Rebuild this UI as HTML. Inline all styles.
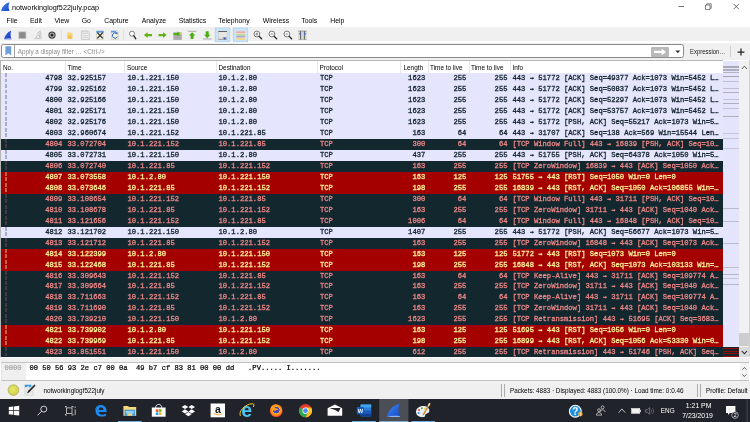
<!DOCTYPE html>
<html lang="en">
<head>
<meta charset="utf-8">
<title>notworkinglogf522july.pcap</title>
<style>
html,body{margin:0;padding:0;}
body{width:750px;height:422px;overflow:hidden;background:#fff;position:relative;
 font-family:"Liberation Sans",sans-serif;font-size:7px;color:#000;}
#app{position:absolute;left:0;top:0;width:750px;height:422px;overflow:hidden;background:#fff;will-change:transform;}
.abs{position:absolute;}
#title{left:0;top:0;width:750px;height:13px;background:#fff;}
#title .t{position:absolute;left:12px;top:2.5px;font-size:7.27px;line-height:9px;color:#000;white-space:nowrap;}
#menu{left:0;top:13px;width:750px;height:14px;background:#fff;}
#menu span{position:absolute;top:2.8px;font-size:6.9px;line-height:9px;white-space:nowrap;color:#000;}
#tool{left:0;top:27.2px;width:750px;height:14.3px;background:#f0f0f0;}
#filter{left:0;top:43.2px;width:750px;height:16.6px;background:#f0f0f0;}
#fbox{left:1.2px;top:44px;width:683px;height:14.4px;background:#fff;border:0.9px solid #8a8a8a;border-radius:2.4px;box-sizing:border-box;}
#expr{left:690px;top:47.1px;font-size:6.6px;line-height:9px;white-space:nowrap;color:#222;transform:scaleX(0.9);transform-origin:0 0;}
#fbox .ph{position:absolute;left:15.6px;top:2.4px;font-size:6.3px;line-height:9px;color:#8c8c8c;white-space:nowrap;}
#hdr{left:1px;top:60px;width:722px;height:12.5px;background:#fff;border-top:0.8px solid #b6b6b6;box-sizing:border-box;}
#hdr span{position:absolute;top:1.7px;font-size:6.4px;line-height:9px;color:#000;white-space:nowrap;}
#hdr i{position:absolute;top:0;width:0.6px;height:12px;background:#e9e9e9;}
#list{left:0;top:0;}
.row{position:absolute;left:1.2px;width:721.5px;height:11px;font-family:"Liberation Mono",monospace;font-size:7.17px;line-height:11px;white-space:nowrap;overflow:hidden;-webkit-text-stroke:0.3px;}
.row.l{background:#e5e5fd;color:#12222c;}
.row.d{background:#12272e;color:#e98585;}
.row.r{background:#a40000;color:#fbf096;}
.a{font-family:"DejaVu Sans Mono","Liberation Mono",monospace;display:inline-block;width:4.302px;text-align:center;font-size:6.4px;line-height:11px;vertical-align:top;}
.c{position:absolute;top:0;height:11px;}
.no{right:660.3px;text-align:right;}
.tm{left:66.3px;}
.src{left:126.3px;}
.dst{left:217.3px;}
.pr{left:318.8px;}
.len{right:297.4px;}
.t1{right:256.4px;}
.t2{right:215.2px;}
.inf{left:511.3px;}
#mm{left:722.7px;top:60.5px;width:16px;height:296.6px;background:#e4e4fd;overflow:hidden;}
#mm i{position:absolute;left:0;width:16px;background:#8c8c94;}
#mm b{position:absolute;left:0;width:16px;background:repeating-linear-gradient(to bottom,#12272e 0,#12272e 1.3px,#9a0a0a 1.3px,#9a0a0a 2.4px);}
#vsb{left:738.7px;top:60.5px;width:10.6px;height:296.6px;background:#f1f1f1;}
.dash{position:absolute;left:4.0px;top:0;width:1.7px;height:11px;opacity:.4;background:repeating-linear-gradient(to bottom,currentColor 0,currentColor 3.7px,transparent 3.7px,transparent 5.5px);}
.row.l .dash{opacity:.28;}
.row.d .dash{opacity:.22;}
#lborder{left:0.2px;top:60px;width:1px;height:298px;background:#b4b4b4;}
#hex{left:0.8px;top:362.2px;width:748.6px;height:18.6px;background:#fff;border:0.7px solid #c2c2c2;border-left-color:#e4e4e4;box-sizing:border-box;}
#hex .off{position:absolute;left:0;top:0;width:24.6px;height:17.3px;background:#efefef;}
#hex span{position:absolute;top:1.1px;font-family:"Liberation Mono",monospace;font-size:7.12px;line-height:9px;white-space:pre;color:#000;-webkit-text-stroke:0.22px;}
#status{left:0;top:380.5px;width:750px;height:18.5px;background:#f0f0f0;}
#status i{position:absolute;top:3px;width:0.8px;height:13px;background:#adadad;}
#status span{position:absolute;top:5px;font-size:6.35px;line-height:9px;white-space:nowrap;color:#000;}
#task{left:0;top:398.5px;width:750px;height:23.5px;background:#202329;}
#task span{position:absolute;line-height:9px;color:#fff;white-space:nowrap;}
</style>
</head>
<body>
<div id="app">
<div id="title" class="abs">
 <svg class="abs" style="left:1px;top:2px" width="10" height="9" viewBox="0 0 10 9"><defs><linearGradient id="tfin" x1="0" y1="0" x2="1" y2="1"><stop offset="0" stop-color="#3f86ee"/><stop offset="1" stop-color="#1748c8"/></linearGradient></defs><path d="M0.2 8.9 C0.9 5 4 1.2 8.4 0.2 C7.2 3 7.4 6.4 8.6 8.9 Z" fill="url(#tfin)"/></svg>
 <span class="t">notworkinglogf522july.pcap</span>
 <svg class="abs" style="left:672.8px;top:0" width="78" height="13" viewBox="0 0 78 13">
  <path d="M5.5 6.5 H11" stroke="#333" stroke-width="0.7" fill="none"/>
  <path d="M32.5 5 H37 V9.5 H32.5 Z M33.7 5 V3.8 H38.2 V8.3 H37" stroke="#333" stroke-width="0.6" fill="none"/>
  <path d="M60.5 3.8 L66 9.3 M66 3.8 L60.5 9.3" stroke="#333" stroke-width="0.7" fill="none"/>
 </svg>
</div>
<div id="menu" class="abs">
 <span style="left:6.4px">File</span><span style="left:30px">Edit</span><span style="left:54.4px">View</span><span style="left:81.7px">Go</span>
 <span style="left:104.2px">Capture</span><span style="left:141.7px">Analyze</span><span style="left:178.7px">Statistics</span>
 <span style="left:218.2px">Telephony</span><span style="left:262.7px">Wireless</span><span style="left:301.2px">Tools</span><span style="left:330.2px">Help</span>
</div>
<div id="tool" class="abs"></div>
<svg class="abs" style="left:0;top:27px" width="320" height="16" viewBox="0 27 320 16">
 <defs>
  <linearGradient id="fin" x1="0" y1="0" x2="1" y2="1"><stop offset="0" stop-color="#3a6fe8"/><stop offset="1" stop-color="#1733b8"/></linearGradient>
  <linearGradient id="fold" x1="0" y1="0" x2="0" y2="1"><stop offset="0" stop-color="#fbe08a"/><stop offset="1" stop-color="#f2b838"/></linearGradient>
 </defs>
 <!-- highlighted toggle backgrounds -->
 <rect x="215.2" y="28" width="14.6" height="13.8" fill="#cce4f7" stroke="#9ccaf0" stroke-width="0.6"/>
 <rect x="233.2" y="28" width="14.6" height="13.8" fill="#cce4f7" stroke="#9ccaf0" stroke-width="0.6"/>
 <!-- 1 start capture (shark fin) -->
 <path d="M4.2 39.2 C4.8 35.6 7.4 32 11.2 30.7 C10.3 33.4 10.4 36.6 11.5 39.2 Z" fill="url(#fin)"/>
 <path d="M4.2 39.2 H11.5 L11.3 38.6 C9 38.1 6.4 38.3 4.2 39.2Z" fill="#a9c0f0"/>
 <!-- 2 stop -->
 <rect x="18.9" y="31.9" width="7" height="6.6" fill="#8a8a8a" stroke="#bdbdbd" stroke-width="0.7"/>
 <!-- 3 restart -->
 <path d="M33.6 39.2 C36 37.6 38.6 34.4 40.6 30.6 C41 32 41.4 33 41.6 34 L41.8 39.2 Z" fill="#d2d2d2"/>
 <circle cx="38" cy="37" r="1.7" fill="#f0f0f0" stroke="#a8a8a8" stroke-width="0.5"/>
 <path d="M37 33.6 L40.4 30.8" stroke="#a0a0a0" stroke-width="0.6"/>
 <!-- 4 options -->
 <circle cx="52" cy="35.1" r="3.6" fill="#3a3a3a"/>
 <circle cx="52" cy="35.1" r="2.1" fill="none" stroke="#e8e8e8" stroke-width="0.8"/>
 <circle cx="52" cy="35.1" r="0.9" fill="#111"/>
 <!-- sep -->
 <rect x="60.9" y="29.6" width="0.6" height="11" fill="#d4d4d4"/>
 <!-- 5 open folder -->
 <path d="M67.3 32 H69.6 L70.2 32.8 H72.4 V38.8 H67.3 Z" fill="url(#fold)"/>
 <!-- 6 save -->
 <path d="M81.6 31 H87.6 L89.2 32.6 V39.6 H81.6 Z" fill="#ececec" stroke="#b4b4b4" stroke-width="0.6"/>
 <path d="M83.2 31 V33.4 H87 V31 M83 35.6 H88 M83 37.4 H88" stroke="#c4c4c4" stroke-width="0.6" fill="none"/>
 <!-- 7 close -->
 <rect x="96.3" y="30.9" width="7.4" height="8.7" fill="#f2f1e0" stroke="#c2c2b4" stroke-width="0.5"/>
 <rect x="96.3" y="30.9" width="7.4" height="1.8" fill="#5b9ae0"/>
 <path d="M97.3 32.6 L102.8 38.4 M102.8 32.6 L97.3 38.4" stroke="#1a1a1a" stroke-width="1.1" fill="none"/>
 <!-- 8 reload -->
 <rect x="111.1" y="30.9" width="7.4" height="8.7" fill="#f2f1e0" stroke="#c2c2b4" stroke-width="0.5"/>
 <rect x="111.1" y="30.9" width="5" height="1.6" fill="#5b9ae0"/>
 <path d="M116.6 33.6 A2.6 2.6 0 1 0 117.4 36.6" stroke="#2a62c8" stroke-width="1" fill="none"/>
 <path d="M115.2 32.2 L117.8 32.4 L117.2 34.8 Z" fill="#2a62c8"/>
 <!-- sep -->
 <rect x="123.3" y="29.6" width="0.6" height="11" fill="#d4d4d4"/>
 <!-- 9 find -->
 <circle cx="132" cy="33.7" r="2.5" fill="#fff" stroke="#555" stroke-width="0.7"/>
 <path d="M133.9 35.9 L135.8 38.8" stroke="#222" stroke-width="1.3" stroke-linecap="round"/>
 <!-- 10 back / 11 forward -->
 <path d="M143.9 35.1 L147.6 32.2 V33.9 H152 V36.3 H147.6 V38 Z" fill="#62b312"/>
 <path d="M166.7 35.1 L163 32.2 V33.9 H158.5 V36.3 H163 V38 Z" fill="#62b312"/>
 <!-- 12 goto -->
 <rect x="173.4" y="32.4" width="8.4" height="7.4" fill="#a2a2a2"/>
 <path d="M173.4 36.4 H181.8 M173.4 38.2 H181.8" stroke="#c8c8c8" stroke-width="0.5"/>
 <rect x="179.6" y="33.2" width="2.2" height="1.4" fill="#f4d84a"/>
 <path d="M180 33.9 L177.4 31.2 V32.9 H173.6 V34.9 H177.4 V36.6 Z" fill="#4fae10"/>
 <!-- 13 first -->
 <rect x="187.8" y="30.8" width="8.6" height="0.8" fill="#9a9a9a"/>
 <path d="M192.1 32.2 L195.4 35.6 H193.6 V39 H190.6 V35.6 H188.8 Z" fill="#4fae10"/>
 <!-- 14 last -->
 <rect x="203" y="38.6" width="8.4" height="0.8" fill="#9a9a9a"/>
 <path d="M207.2 38.2 L210.4 34.8 H208.7 V31.2 H205.7 V34.8 H204 Z" fill="#4fae10"/>
 <!-- 15 autoscroll -->
 <rect x="218.4" y="31.2" width="8.6" height="8.2" fill="#e6e6e2" stroke="#bcbcbc" stroke-width="0.4"/>
 <rect x="218.4" y="31" width="8.6" height="0.9" fill="#555"/>
 <rect x="218.4" y="38.8" width="8.6" height="0.8" fill="#8a8a8a"/>
 <path d="M222.6 37.6 H226.8 L224.7 39.6 Z" fill="#1c4fb4"/>
 <!-- 16 colorize -->
 <rect x="236.4" y="31.4" width="8.6" height="2.2" fill="#f2a7a0"/>
 <rect x="236.4" y="33.6" width="8.6" height="0.5" fill="#fff"/>
 <rect x="236.4" y="34.1" width="8.6" height="1.6" fill="#b4e47c"/>
 <rect x="236.4" y="35.7" width="8.6" height="1.9" fill="#b4a6e0"/>
 <rect x="236.4" y="37.6" width="8.6" height="2.5" fill="#ecd890"/>
 <!-- 17-19 zoom -->
 <g fill="#fff" stroke="#444" stroke-width="0.7">
  <circle cx="256.9" cy="34" r="2.9"/><circle cx="271.9" cy="34" r="2.9"/><circle cx="286.9" cy="34" r="2.9"/>
 </g>
 <g stroke="#222" stroke-width="1.3" stroke-linecap="round">
  <path d="M259.2 36.4 L261.6 38.8"/><path d="M274.2 36.4 L276.6 38.8"/><path d="M289.2 36.4 L291.6 38.8"/>
 </g>
 <path d="M255.4 34 H258.4 M256.9 32.5 V35.5 M270.4 34 H273.4 M285.6 34 H288.2" stroke="#444" stroke-width="0.6"/>
 <!-- 20 resize columns -->
 <rect x="298.2" y="30.9" width="8.6" height="9" fill="#d8d8d4"/>
 <rect x="298.2" y="30.7" width="8.6" height="0.7" fill="#8a8a8a"/>
 <rect x="298.2" y="39.4" width="8.6" height="0.6" fill="#b0b0b0"/>
 <rect x="300.2" y="31" width="0.9" height="8.6" fill="#555"/><rect x="303.9" y="31" width="0.9" height="8.6" fill="#555"/>
 <rect x="299.4" y="33" width="1.6" height="1.6" fill="#2a6ad4"/><rect x="304" y="33" width="1.6" height="1.6" fill="#2a6ad4"/>
</svg>
<div id="filter" class="abs"></div>
<div id="fbox" class="abs"><svg class="abs" style="left:3px;top:1.4px" width="7" height="10" viewBox="0 0 7 10"><path d="M0.4 0.2 H6.2 V9.6 L3.3 7.2 L0.4 9.6 Z" fill="#6f9fd8"/></svg><i class="abs" style="left:12.2px;top:0.4px;width:0.6px;height:11.8px;background:#a4a4a4"></i><span class="ph">Apply a display filter … &lt;Ctrl-/&gt;</span>
 <div class="abs" style="left:648.6px;top:2px;width:18px;height:9.8px;background:#b9b9b9;border-radius:1px"></div>
 <svg class="abs" style="left:648.6px;top:2px" width="18" height="9.8" viewBox="0 0 18 9.8"><path d="M3 3.7 H10.6 V1.6 L15 4.9 L10.6 8.2 V6.1 H3 Z" fill="#fff"/></svg>
 <svg class="abs" style="left:672.6px;top:4.9px" width="6" height="4" viewBox="0 0 6 4"><path d="M0.3 0.5 H5.3 L2.8 3.3 Z" fill="#333"/></svg>
</div>
<span class="abs" id="expr">Expression…</span>
<i class="abs" style="left:730.2px;top:46px;width:0.6px;height:11px;background:#cfcfcf"></i>
<svg class="abs" style="left:736.8px;top:47.6px" width="8" height="8" viewBox="0 0 8 8"><path d="M4 0.6 V7.4 M0.6 4 H7.4" stroke="#222" stroke-width="1.25"/></svg>
<div id="hdr" class="abs">
 <span style="left:2px">No.</span><span style="left:66.5px">Time</span><span style="left:126px">Source</span><span style="left:217.5px">Destination</span>
 <span style="left:318.5px">Protocol</span><span style="left:402.5px">Length</span><span style="left:429px">Time to live</span><span style="left:470px">Time to live</span><span style="left:511.5px">Info</span>
 <i style="left:63.6px"></i><i style="left:123.1px"></i><i style="left:214.6px"></i><i style="left:315.6px"></i><i style="left:399.1px"></i><i style="left:426.6px"></i><i style="left:467.6px"></i><i style="left:508.6px"></i>
</div>
<div id="list" class="abs">
<div class="row l" style="top:73.25px"><i class="dash"></i><span class="c no">4798</span><span class="c tm">32.925157</span><span class="c src">10.1.221.150</span><span class="c dst">10.1.2.80</span><span class="c pr">TCP</span><span class="c len">1623</span><span class="c t1">255</span><span class="c t2">255</span><span class="c inf">443 <span class="a">→</span> 51772 [ACK] Seq=49377 Ack=1073 Win=5452 L…</span></div>
<div class="row l" style="top:84.21px"><i class="dash"></i><span class="c no">4799</span><span class="c tm">32.925162</span><span class="c src">10.1.221.150</span><span class="c dst">10.1.2.80</span><span class="c pr">TCP</span><span class="c len">1623</span><span class="c t1">255</span><span class="c t2">255</span><span class="c inf">443 <span class="a">→</span> 51772 [ACK] Seq=50837 Ack=1073 Win=5452 L…</span></div>
<div class="row l" style="top:95.17px"><i class="dash"></i><span class="c no">4800</span><span class="c tm">32.925166</span><span class="c src">10.1.221.150</span><span class="c dst">10.1.2.80</span><span class="c pr">TCP</span><span class="c len">1623</span><span class="c t1">255</span><span class="c t2">255</span><span class="c inf">443 <span class="a">→</span> 51772 [ACK] Seq=52297 Ack=1073 Win=5452 L…</span></div>
<div class="row l" style="top:106.13px"><i class="dash"></i><span class="c no">4801</span><span class="c tm">32.925171</span><span class="c src">10.1.221.150</span><span class="c dst">10.1.2.80</span><span class="c pr">TCP</span><span class="c len">1623</span><span class="c t1">255</span><span class="c t2">255</span><span class="c inf">443 <span class="a">→</span> 51772 [ACK] Seq=53757 Ack=1073 Win=5452 L…</span></div>
<div class="row l" style="top:117.09px"><i class="dash"></i><span class="c no">4802</span><span class="c tm">32.925176</span><span class="c src">10.1.221.150</span><span class="c dst">10.1.2.80</span><span class="c pr">TCP</span><span class="c len">1623</span><span class="c t1">255</span><span class="c t2">255</span><span class="c inf">443 <span class="a">→</span> 51772 [PSH, ACK] Seq=55217 Ack=1073 Win=5…</span></div>
<div class="row l" style="top:128.05px"><i class="dash"></i><span class="c no">4803</span><span class="c tm">32.960674</span><span class="c src">10.1.221.152</span><span class="c dst">10.1.221.85</span><span class="c pr">TCP</span><span class="c len">163</span><span class="c t1">64</span><span class="c t2">64</span><span class="c inf">443 <span class="a">→</span> 31707 [ACK] Seq=138 Ack=569 Win=15544 Len…</span></div>
<div class="row d" style="top:139.01px"><i class="dash"></i><span class="c no">4804</span><span class="c tm">33.072704</span><span class="c src">10.1.221.152</span><span class="c dst">10.1.221.85</span><span class="c pr">TCP</span><span class="c len">300</span><span class="c t1">64</span><span class="c t2">64</span><span class="c inf">[TCP Window Full] 443 <span class="a">→</span> 16839 [PSH, ACK] Seq=10…</span></div>
<div class="row l" style="top:149.97px"><i class="dash"></i><span class="c no">4805</span><span class="c tm">33.072731</span><span class="c src">10.1.221.150</span><span class="c dst">10.1.2.80</span><span class="c pr">TCP</span><span class="c len">437</span><span class="c t1">255</span><span class="c t2">255</span><span class="c inf">443 <span class="a">→</span> 51755 [PSH, ACK] Seq=64378 Ack=1050 Win=5…</span></div>
<div class="row d" style="top:160.93px"><i class="dash"></i><span class="c no">4806</span><span class="c tm">33.072740</span><span class="c src">10.1.221.85</span><span class="c dst">10.1.221.152</span><span class="c pr">TCP</span><span class="c len">163</span><span class="c t1">255</span><span class="c t2">255</span><span class="c inf">[TCP ZeroWindow] 16839 <span class="a">→</span> 443 [ACK] Seq=1050 Ack…</span></div>
<div class="row r" style="top:171.89px"><i class="dash"></i><span class="c no">4807</span><span class="c tm">33.073558</span><span class="c src">10.1.2.80</span><span class="c dst">10.1.221.150</span><span class="c pr">TCP</span><span class="c len">163</span><span class="c t1">125</span><span class="c t2">125</span><span class="c inf">51755 <span class="a">→</span> 443 [RST] Seq=1050 Win=0 Len=0</span></div>
<div class="row r" style="top:182.85px"><i class="dash"></i><span class="c no">4808</span><span class="c tm">33.073646</span><span class="c src">10.1.221.85</span><span class="c dst">10.1.221.152</span><span class="c pr">TCP</span><span class="c len">198</span><span class="c t1">255</span><span class="c t2">255</span><span class="c inf">16839 <span class="a">→</span> 443 [RST, ACK] Seq=1050 Ack=106855 Win=…</span></div>
<div class="row d" style="top:193.81px"><i class="dash"></i><span class="c no">4809</span><span class="c tm">33.108654</span><span class="c src">10.1.221.152</span><span class="c dst">10.1.221.85</span><span class="c pr">TCP</span><span class="c len">300</span><span class="c t1">64</span><span class="c t2">64</span><span class="c inf">[TCP Window Full] 443 <span class="a">→</span> 31711 [PSH, ACK] Seq=10…</span></div>
<div class="row d" style="top:204.77px"><i class="dash"></i><span class="c no">4810</span><span class="c tm">33.108678</span><span class="c src">10.1.221.85</span><span class="c dst">10.1.221.152</span><span class="c pr">TCP</span><span class="c len">163</span><span class="c t1">255</span><span class="c t2">255</span><span class="c inf">[TCP ZeroWindow] 31711 <span class="a">→</span> 443 [ACK] Seq=1040 Ack…</span></div>
<div class="row d" style="top:215.73px"><i class="dash"></i><span class="c no">4811</span><span class="c tm">33.121656</span><span class="c src">10.1.221.152</span><span class="c dst">10.1.221.85</span><span class="c pr">TCP</span><span class="c len">1006</span><span class="c t1">64</span><span class="c t2">64</span><span class="c inf">[TCP Window Full] 443 <span class="a">→</span> 16848 [PSH, ACK] Seq=10…</span></div>
<div class="row l" style="top:226.69px"><i class="dash"></i><span class="c no">4812</span><span class="c tm">33.121702</span><span class="c src">10.1.221.150</span><span class="c dst">10.1.2.80</span><span class="c pr">TCP</span><span class="c len">1407</span><span class="c t1">255</span><span class="c t2">255</span><span class="c inf">443 <span class="a">→</span> 51772 [PSH, ACK] Seq=56677 Ack=1073 Win=5…</span></div>
<div class="row d" style="top:237.65px"><i class="dash"></i><span class="c no">4813</span><span class="c tm">33.121712</span><span class="c src">10.1.221.85</span><span class="c dst">10.1.221.152</span><span class="c pr">TCP</span><span class="c len">163</span><span class="c t1">255</span><span class="c t2">255</span><span class="c inf">[TCP ZeroWindow] 16848 <span class="a">→</span> 443 [ACK] Seq=1073 Ack…</span></div>
<div class="row r" style="top:248.61px"><i class="dash"></i><span class="c no">4814</span><span class="c tm">33.122399</span><span class="c src">10.1.2.80</span><span class="c dst">10.1.221.150</span><span class="c pr">TCP</span><span class="c len">163</span><span class="c t1">125</span><span class="c t2">125</span><span class="c inf">51772 <span class="a">→</span> 443 [RST] Seq=1073 Win=0 Len=0</span></div>
<div class="row r" style="top:259.57px"><i class="dash"></i><span class="c no">4815</span><span class="c tm">33.122468</span><span class="c src">10.1.221.85</span><span class="c dst">10.1.221.152</span><span class="c pr">TCP</span><span class="c len">198</span><span class="c t1">255</span><span class="c t2">255</span><span class="c inf">16848 <span class="a">→</span> 443 [RST, ACK] Seq=1073 Ack=103133 Win=…</span></div>
<div class="row d" style="top:270.53px"><i class="dash"></i><span class="c no">4816</span><span class="c tm">33.309643</span><span class="c src">10.1.221.152</span><span class="c dst">10.1.221.85</span><span class="c pr">TCP</span><span class="c len">163</span><span class="c t1">64</span><span class="c t2">64</span><span class="c inf">[TCP Keep-Alive] 443 <span class="a">→</span> 31711 [ACK] Seq=109774 A…</span></div>
<div class="row d" style="top:281.49px"><i class="dash"></i><span class="c no">4817</span><span class="c tm">33.309664</span><span class="c src">10.1.221.85</span><span class="c dst">10.1.221.152</span><span class="c pr">TCP</span><span class="c len">163</span><span class="c t1">255</span><span class="c t2">255</span><span class="c inf">[TCP ZeroWindow] 31711 <span class="a">→</span> 443 [ACK] Seq=1040 Ack…</span></div>
<div class="row d" style="top:292.45px"><i class="dash"></i><span class="c no">4818</span><span class="c tm">33.711663</span><span class="c src">10.1.221.152</span><span class="c dst">10.1.221.85</span><span class="c pr">TCP</span><span class="c len">163</span><span class="c t1">64</span><span class="c t2">64</span><span class="c inf">[TCP Keep-Alive] 443 <span class="a">→</span> 31711 [ACK] Seq=109774 A…</span></div>
<div class="row d" style="top:303.41px"><i class="dash"></i><span class="c no">4819</span><span class="c tm">33.711690</span><span class="c src">10.1.221.85</span><span class="c dst">10.1.221.152</span><span class="c pr">TCP</span><span class="c len">163</span><span class="c t1">255</span><span class="c t2">255</span><span class="c inf">[TCP ZeroWindow] 31711 <span class="a">→</span> 443 [ACK] Seq=1040 Ack…</span></div>
<div class="row d" style="top:314.37px"><i class="dash"></i><span class="c no">4820</span><span class="c tm">33.739210</span><span class="c src">10.1.221.150</span><span class="c dst">10.1.2.80</span><span class="c pr">TCP</span><span class="c len">1623</span><span class="c t1">255</span><span class="c t2">255</span><span class="c inf">[TCP Retransmission] 443 <span class="a">→</span> 51695 [ACK] Seq=3683…</span></div>
<div class="row r" style="top:325.33px"><i class="dash"></i><span class="c no">4821</span><span class="c tm">33.739902</span><span class="c src">10.1.2.80</span><span class="c dst">10.1.221.150</span><span class="c pr">TCP</span><span class="c len">163</span><span class="c t1">125</span><span class="c t2">125</span><span class="c inf">51695 <span class="a">→</span> 443 [RST] Seq=1056 Win=0 Len=0</span></div>
<div class="row r" style="top:336.29px"><i class="dash"></i><span class="c no">4822</span><span class="c tm">33.739969</span><span class="c src">10.1.221.85</span><span class="c dst">10.1.221.152</span><span class="c pr">TCP</span><span class="c len">198</span><span class="c t1">255</span><span class="c t2">255</span><span class="c inf">16899 <span class="a">→</span> 443 [RST, ACK] Seq=1056 Ack=53330 Win=0…</span></div>
<div class="row d" style="top:347.25px"><i class="dash"></i><span class="c no">4823</span><span class="c tm">33.851551</span><span class="c src">10.1.221.150</span><span class="c dst">10.1.2.80</span><span class="c pr">TCP</span><span class="c len">612</span><span class="c t1">255</span><span class="c t2">255</span><span class="c inf">[TCP Retransmission] 443 <span class="a">→</span> 51746 [PSH, ACK] Seq…</span></div>
</div>
<div id="lborder" class="abs"></div>
<div id="mm" class="abs"><i style="top:5.7px;height:1.6px;opacity:0.67"></i><i style="top:8.9px;height:1.4px;opacity:0.62"></i><i style="top:11.3px;height:1.2px;opacity:0.57"></i><i style="top:15.5px;height:1px;opacity:0.72"></i><i style="top:20.9px;height:0.8px;opacity:0.42"></i><i style="top:27.1px;height:0.8px;opacity:0.42"></i><i style="top:31.7px;height:0.9px;opacity:0.62"></i><i style="top:38.8px;height:0.8px;opacity:0.37"></i><i style="top:42.7px;height:0.9px;opacity:0.62"></i><i style="top:47.7px;height:0.8px;opacity:0.37"></i><i style="top:55.7px;height:0.9px;opacity:0.62"></i><i style="top:72.3px;height:0.7px;opacity:0.32"></i><i style="top:77.6px;height:0.7px;opacity:0.37"></i><i style="top:87.3px;height:0.7px;opacity:0.32"></i><i style="top:147.6px;height:0.9px;opacity:0.47"></i><i style="top:160.1px;height:0.8px;opacity:0.42"></i><i style="top:182.7px;height:0.9px;opacity:0.47"></i><i style="top:206.9px;height:0.8px;opacity:0.42"></i><i style="top:213.2px;height:0.9px;opacity:0.52"></i><i style="top:217.1px;height:0.8px;opacity:0.37"></i><i style="top:223.0px;height:0.9px;opacity:0.52"></i><b style="top:286px;height:10.6px"></b></div>
<div id="vsb" class="abs"><svg class="abs" style="left:2px;top:4.6px" width="7" height="5" viewBox="0 0 7 5"><path d="M0.8 4 L3.4 1.2 L6 4" fill="none" stroke="#444" stroke-width="0.9"/></svg>
 <div class="abs" style="left:0.6px;top:272.6px;width:9.6px;height:13px;background:#cdcdcd"></div>
 <div class="abs" style="left:0;top:286px;width:10.6px;height:10.6px;background:#dadada"></div>
 <svg class="abs" style="left:2px;top:289.4px" width="7" height="5" viewBox="0 0 7 5"><path d="M0.8 1 L3.4 3.8 L6 1" fill="none" stroke="#222" stroke-width="1.1"/></svg>
</div>
<i class="abs" style="left:749.3px;top:60px;width:0.7px;height:297px;background:#d0d0d0"></i>
<div class="abs" style="left:0;top:357px;width:750px;height:5px;background:#f0f0f0"></div><div class="abs" style="left:0.5px;top:357px;width:749px;height:1.2px;background:#fcfcfc"></div>
<div id="hex" class="abs"><div class="off"></div><div class="abs" style="left:738px;top:0;width:9.4px;height:17px;background:#f4f4f4"></div>
 <svg class="abs" style="left:739.4px;top:3.2px" width="7" height="12" viewBox="0 0 7 12"><path d="M1.3 3.6 L3.4 1.5 L5.5 3.6 M1.3 8.4 L3.4 10.5 L5.5 8.4" fill="none" stroke="#4a4a4a" stroke-width="0.9"/></svg>
 <span style="left:2.6px;color:#a8a8a8">0000</span>
 <span style="left:27.6px">00 50 56 93 2e c7 00 0a  49 b7 cf 83 81 00 00 dd</span>
 <span style="left:246.3px">.PV..... I.......</span>
</div>
<div id="status" class="abs">
 <svg class="abs" style="left:6px;top:2px" width="32" height="15" viewBox="6 382.5 32 15">
  <defs><radialGradient id="yl" cx="0.45" cy="0.4" r="0.6"><stop offset="0" stop-color="#e6e66c"/><stop offset="1" stop-color="#d2d24e"/></radialGradient></defs>
  <circle cx="13.4" cy="389.6" r="5.3" fill="url(#yl)" stroke="#a4a444" stroke-width="0.7"/>
  <rect x="24.6" y="384.2" width="8.6" height="10.8" rx="0.6" fill="#e6e6e2" stroke="#cfcfcb" stroke-width="0.4"/>
  <rect x="24.8" y="384.3" width="6.4" height="2.3" fill="#2f9be8"/>
  <path d="M27 386.6 L28.2 385.4 L29.4 386.6Z" fill="#fff"/>
  <path d="M26 393 H32" stroke="#f8f8f8" stroke-width="0.6"/>
  <path d="M34.6 385 L28.6 391.2" stroke="#2a2a2a" stroke-width="1.7" stroke-linecap="round"/>
  <path d="M28.6 391.2 L27.6 392.4" stroke="#111" stroke-width="1" stroke-linecap="round"/>
 </svg>
 <i style="left:500.7px"></i><i style="left:503.9px"></i><i style="left:697.1px"></i><i style="left:700.3px"></i>
 <span style="left:43.5px">notworkinglogf522july</span>
 <span style="left:510px">Packets: 4883 · Displayed: 4883 (100.0%) · Load time: 0:0.46</span>
 <span style="left:706px">Profile: Default</span>
</div>
<div id="task" class="abs">
<svg class="abs" style="left:0;top:0" width="750" height="23.5" viewBox="0 398.5 750 23.5">
 <defs>
  <linearGradient id="wfin" x1="0" y1="0" x2="1" y2="1"><stop offset="0" stop-color="#3c8cf4"/><stop offset="1" stop-color="#1746c4"/></linearGradient>
  <radialGradient id="ffx" cx="0.5" cy="0.45" r="0.55"><stop offset="0" stop-color="#5b3fc4"/><stop offset="0.45" stop-color="#3a46c8"/><stop offset="0.5" stop-color="#ffb41e"/><stop offset="0.8" stop-color="#ff7a16"/><stop offset="1" stop-color="#e8243c"/></radialGradient>
 </defs>
 <!-- active app highlight -->
 <rect x="379.2" y="398.5" width="29.2" height="23.5" fill="#4b4e54"/>
 <!-- running indicators -->
 <rect x="118" y="420.6" width="23.7" height="1.4" fill="#7cc0f2"/>
 <rect x="352" y="420.6" width="23.8" height="1.4" fill="#7cc0f2"/>
 <rect x="379.2" y="420.7" width="29.2" height="1.3" fill="#8cc6f2"/>
 <rect x="411.3" y="420.6" width="23.7" height="1.4" fill="#7cc0f2"/>
 <!-- windows logo -->
 <path d="M8.8 406.6 L13.2 406 V409.8 H8.8 Z M13.9 405.9 L19.2 405.2 V409.8 H13.9 Z M8.8 410.5 H13.2 V414.3 L8.8 413.7 Z M13.9 410.5 H19.2 V415.1 L13.9 414.4 Z" fill="#fff"/>
 <!-- search -->
 <circle cx="43.8" cy="408.6" r="3" fill="none" stroke="#e4e4e4" stroke-width="0.9"/>
 <path d="M41.6 410.8 L37.6 414.8" stroke="#e4e4e4" stroke-width="0.9"/>
 <!-- task view -->
 <rect x="66.4" y="407.4" width="5.6" height="5.6" fill="none" stroke="#d8d8d8" stroke-width="0.8"/>
 <path d="M65.2 406 H67 M71.4 406 H73.2 M65.2 414.5 H67 M71.4 414.5 H73.2 M65.4 405.8 V407 M73 405.8 V407 M65.4 413.4 V414.7 M73 413.4 V414.7" stroke="#d8d8d8" stroke-width="0.7"/>
 <path d="M75.2 406 V407.4 M75.2 408.8 V414.6" stroke="#d8d8d8" stroke-width="0.8"/>
 <!-- edge -->
 <path d="M94.9 410.2 C95 406.6 97.6 404.4 100.8 404.4 C104.2 404.4 106.6 406.8 106.6 410.6 V411.6 H98.6 C98.8 413.2 100.2 414.2 102 414.2 C103.4 414.2 104.8 413.8 106 413 V415.2 C104.8 415.8 103.2 416.1 101.6 416.1 C97.8 416.1 95.6 413.8 95.6 410.8 C95.6 408.8 96.8 407.2 98.4 406.4 C97.2 407 95.6 408.2 94.9 410.2 Z M98.7 409.4 H103.4 C103.4 407.8 102.4 406.8 101 406.8 C99.8 406.8 98.9 407.8 98.7 409.4 Z" fill="#1c8cf0"/>
 <!-- file explorer -->
 <path d="M123.4 405.4 H128 L129 406.6 H136.2 V415.2 H123.4 Z" fill="#f8d87a"/>
 <rect x="124.6" y="409.2" width="10.4" height="6" fill="#3a9be4"/>
 <rect x="125.8" y="410.4" width="8" height="2.6" fill="#9ad2f6"/>
 <rect x="127.4" y="413" width="4.8" height="2.2" fill="#f8d87a"/>
 <!-- store -->
 <path d="M155.6 407.4 C155.6 402.8 161.8 402.8 161.8 407.4" fill="none" stroke="#fff" stroke-width="0.9"/>
 <rect x="151.8" y="407" width="13.8" height="9.2" fill="#fff"/>
 <rect x="155.8" y="408.8" width="2.6" height="2.6" fill="#f0502a"/><rect x="158.9" y="408.8" width="2.6" height="2.6" fill="#7cba18"/>
 <rect x="155.8" y="411.9" width="2.6" height="2.6" fill="#18a4ee"/><rect x="158.9" y="411.9" width="2.6" height="2.6" fill="#fcb814"/>
 <!-- dropbox -->
 <path d="M185 404.4 L188.3 406.5 L185 408.6 L181.7 406.5 Z M191.7 404.4 L195 406.5 L191.7 408.6 L188.4 406.5 Z M185 408.8 L188.3 410.9 L185 413 L181.7 410.9 Z M191.7 408.8 L195 410.9 L191.7 413 L188.4 410.9 Z M188.35 411.6 L191.6 413.7 L188.35 415.8 L185.1 413.7 Z" fill="#fff"/>
 <!-- amazon -->
 <rect x="210.6" y="403" width="14.4" height="13.8" fill="#fff"/>
 <text x="217.8" y="412" font-family="Liberation Sans, sans-serif" font-size="10.5" font-weight="bold" text-anchor="middle" fill="#111">a</text>
 <path d="M213.6 412.8 C216.4 414.8 219.8 414.8 222.2 413.2" fill="none" stroke="#f79a1c" stroke-width="0.9"/>
 <!-- IE -->
 <text x="246.6" y="416" font-family="Liberation Sans, sans-serif" font-size="19.5" font-weight="bold" text-anchor="middle" fill="#4fc4f4">e</text>
 <path d="M240.4 415.4 C238 411 245.4 403.4 252.4 403.2 C254.6 403.2 254 405.4 253.2 406.6" fill="none" stroke="#f4c81c" stroke-width="1"/>
 <!-- firefox -->
 <circle cx="276.2" cy="410.2" r="6.4" fill="url(#ffx)"/>
 <path d="M270.4 408 C271.4 405 274 403.6 276.6 404 C274.8 405 274.4 406.4 275 407.4 C276.6 407.4 278 408.2 278.4 409.8 C277.2 409.2 275.6 409.4 274.8 410.6 C273.6 410.4 272.8 409.6 272.6 408.6 C271.8 408.8 270.8 408.6 270.4 408 Z" fill="#ff9a1c"/>
 <!-- chrome -->
 <circle cx="305.5" cy="410.2" r="6.6" fill="#e33b2e"/>
 <path d="M305.5 410.2 L299.8 406.9 A6.6 6.6 0 0 0 305.5 416.8 L308.8 411.1 Z" fill="#2da94f"/>
 <path d="M305.5 410.2 L308.8 411.1 L305.5 416.8 A6.6 6.6 0 0 0 311.2 406.9 H305.5 Z" fill="#fcc31e"/>
 <circle cx="305.5" cy="410.2" r="3.1" fill="#fff"/><circle cx="305.5" cy="410.2" r="2.4" fill="#4a8af4"/>
 <!-- mail -->
 <path d="M327.6 407.8 L334.9 404 L342.2 407.8 V415.2 H327.6 Z" fill="#fff"/>
 <path d="M329.4 407.6 H340.6 L338.6 411.6 L335 409.6 Z" fill="#202329"/>
 <!-- word -->
 <rect x="360.6" y="404" width="10.6" height="12" rx="0.8" fill="#2b7cd3"/>
 <rect x="360.6" y="404" width="10.6" height="3" fill="#41a5ee"/><rect x="360.6" y="413" width="10.6" height="3" fill="#103f91"/><rect x="360.6" y="410" width="10.6" height="3" fill="#185abd"/>
 <rect x="356.8" y="406.6" width="7.2" height="7.2" rx="0.6" fill="#185abd"/>
 <text x="360.4" y="412.3" font-family="Liberation Sans, sans-serif" font-size="5.6" font-weight="bold" text-anchor="middle" fill="#fff">W</text>
 <!-- wireshark -->
 <path d="M386.8 416.6 C387.8 410.6 392.6 404.8 399.6 403.2 C397.8 407.6 398.2 412.6 400.2 416.6 Z" fill="url(#wfin)"/>
 <path d="M386.8 416.6 H400.2 L399.9 415.7 C395.4 414.9 391 415.3 386.8 416.6 Z" fill="#8fb6f4"/>
 <!-- paint -->
 <path d="M416 411.6 C416 407.6 420 405 424.4 405.6 C428.2 406.2 430 408.8 429.2 411.2 C428.6 413 426.4 412.6 425.6 413.8 C424.8 415.2 425.6 416.4 423.4 416.6 C419.4 417 416 415 416 411.6 Z" fill="#e8eef4"/>
 <circle cx="419" cy="409.4" r="1" fill="#e8462e"/><circle cx="421.8" cy="407.8" r="1" fill="#4cb848"/><circle cx="418.6" cy="412.6" r="1" fill="#3c8ce4"/><circle cx="425" cy="408" r="0.9" fill="#f4c430"/>
 <path d="M429.4 403.6 L423.4 414.2" stroke="#d88a2e" stroke-width="1.5" stroke-linecap="round"/>
 <path d="M429.6 403.2 L428.6 405" stroke="#f0d8a8" stroke-width="1.6" stroke-linecap="round"/>
 <!-- help -->
 <circle cx="575.3" cy="410.7" r="5.9" fill="#1b8fe4" stroke="#fff" stroke-width="1.1"/>
 <text x="575.3" y="414.4" font-family="Liberation Sans, sans-serif" font-size="10" font-weight="bold" text-anchor="middle" fill="#fff">?</text>
 <circle cx="580.4" cy="413.6" r="2.3" fill="#f5a623"/>
 <rect x="580.1" y="412.2" width="0.7" height="1.8" fill="#fff"/><rect x="580.1" y="414.4" width="0.7" height="0.7" fill="#fff"/>
 <!-- people -->
 <circle cx="602.6" cy="406.8" r="1.5" fill="none" stroke="#e0e0e0" stroke-width="0.7"/>
 <path d="M600.2 411.6 C600.2 408.6 605 408.6 605 411.6" fill="none" stroke="#e0e0e0" stroke-width="0.7"/>
 <circle cx="599" cy="409.6" r="1.4" fill="none" stroke="#e0e0e0" stroke-width="0.7"/>
 <path d="M596.4 414.6 C596.4 411.2 601.6 411.2 601.6 414.6 Z" fill="none" stroke="#e0e0e0" stroke-width="0.7"/>
 <!-- chevron -->
 <path d="M618.6 412.2 L621.9 408.4 L625.2 412.2" fill="none" stroke="#e8e8e8" stroke-width="0.8"/>
 <!-- battery -->
 <rect x="631.6" y="408" width="8.2" height="4.8" fill="#f2f2f2" stroke="#fff" stroke-width="0.5"/>
 <rect x="640.1" y="409.4" width="0.9" height="2" fill="#e8e8e8"/>
 <!-- speaker -->
 <path d="M645.6 409.2 H647.4 L649.6 407.2 V413.8 L647.4 411.8 H645.6 Z" fill="none" stroke="#8e8e8e" stroke-width="0.7"/>
 <path d="M651 408.8 C651.9 409.8 651.9 411.2 651 412.2 M652.4 407.6 C654 409.4 654 411.6 652.4 413.4" fill="none" stroke="#7c7c7c" stroke-width="0.6"/>
 <!-- notification -->
 <path d="M726 405.6 H735.4 V412.6 H729.8 L728 414.4 V412.6 H726 Z" fill="#fff"/>
 <path d="M727.6 407.6 H733.8 M727.6 409.2 H733.8 M727.6 410.8 H731" stroke="#c4c4c4" stroke-width="0.4"/>
 <circle cx="735" cy="414.6" r="3.3" fill="#202329" stroke="#f0f0f0" stroke-width="0.6"/>
 <text x="735" y="416.7" font-family="Liberation Sans, sans-serif" font-size="5.8" text-anchor="middle" fill="#fff">2</text>
 <rect x="746.8" y="398.5" width="0.5" height="23.5" fill="#6a6c70"/>
</svg>
<span style="left:660.8px;top:7.6px;font-size:6.4px">ENG</span>
<span style="left:685.8px;top:2px;font-size:6.9px">1:21 PM</span>
<span style="left:682.2px;top:12.8px;font-size:6.9px">7/23/2019</span>
</div>
</div>
</body>
</html>
